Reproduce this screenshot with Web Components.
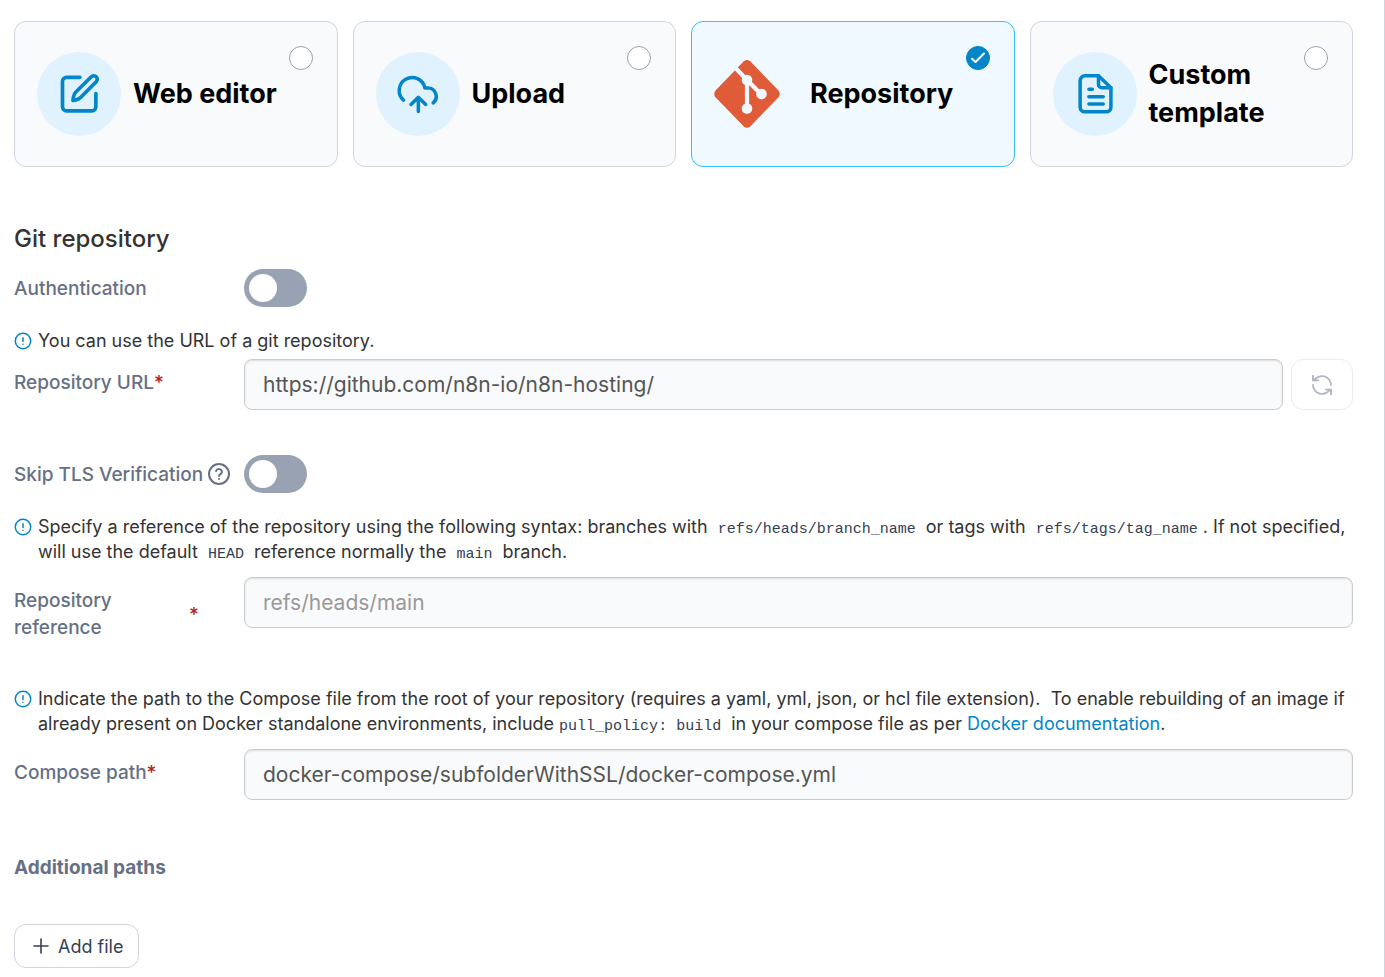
<!DOCTYPE html>
<html lang="en">
<head>
<meta charset="utf-8">
<title>Create stack</title>
<style>
    body {
        margin: 0;
        background: #fff;
        color: #333;
        font-family: Inter, "Liberation Sans", sans-serif;
        font-size: 18px;
        line-height: 25px;
        --blue: #0086c9;
        --muted: #667085;
        --line: #d0d5dd;
        --grey: #98a2b3;
        --surface: #f9fafb;
    }
</style>
</head>
<body>
<stack-form></stack-form>

<script>
const ICONS = {
    edit: `<svg width="44" height="44" viewBox="0 0 24 24" fill="none" stroke="currentColor" stroke-width="2" stroke-linecap="round" stroke-linejoin="round">
        <path d="M12.5 2.9H5.2A2.2 2.2 0 0 0 3 5.100V19a2.200 2.200 0 0 0 2.200 2.200H19a2.200 2.200 0 0 0 2.200-2.200v-7.200"/>
        <path d="M9 13.500c.15-1 .6-1.900 1.300-2.600L18.700 2.600a1.900 1.900 0 0 1 2.700 2.700L13 13.800c-.7.700-1.600 1.200-2.600 1.400L8.700 15.500z"/></svg>`,
    upload: `<svg width="42" height="42" viewBox="0 0 24 24" fill="none" stroke="currentColor" stroke-width="2" stroke-linecap="round" stroke-linejoin="round">
        <path d="M3.700 15.500A7.400 7.400 0 1 1 15.900 8.500h1.700a4.900 4.900 0 0 1 3.100 8.600"/>
        <path d="M8 18l4.200-4.100 4.200 4.100M12.200 14v8"/></svg>`,
    git: `<svg width="66" height="68" viewBox="0 0 66 68">
        <path fill="#e05c38" d="M29.800 1.200Q33 -1.100 36.200 1.200L64.500 30.500Q67 34 64.500 37.200L36.200 66.600Q33 69 29.800 66.600L1.500 37.200Q-1 34 1.500 30.500Z"/>
        <g stroke="#f0f9ff" stroke-width="4.200" fill="none"><path d="M20.500 7L33 20L47.500 34.500M33 20V48.500"/></g>
        <g fill="#f0f9ff"><circle cx="33" cy="20" r="5.300"/><circle cx="47.500" cy="34" r="5.300"/><circle cx="33" cy="48.500" r="5.300"/></g></svg>`,
    file: `<svg width="42" height="42" viewBox="0 0 24 24" fill="none" stroke="currentColor" stroke-width="2" stroke-linecap="round" stroke-linejoin="round">
        <path d="M14 1.600H6.200A2.700 2.700 0 0 0 3.500 4.300v15.200a2.700 2.700 0 0 0 2.700 2.700h12.200a2.700 2.700 0 0 0 2.700-2.700V8.400z"/>
        <path d="M14 1.600v4.900a1.900 1.900 0 0 0 1.900 1.900h5.200M8.500 9.300h2M8.500 13.500h8.200M8.500 17.700h8.200"/></svg>`,
    info: `<svg width="18" height="18" viewBox="0 0 18 18" fill="none" stroke="currentColor" stroke-width="1.500" stroke-linecap="round">
        <circle cx="9" cy="9" r="7.700"/><path d="M9 5.800v3.600M9 12.200v.1"/></svg>`,
    help: `<svg width="24" height="24" viewBox="0 0 24 24" fill="none" stroke="currentColor" stroke-width="2" stroke-linecap="round" stroke-linejoin="round">
        <circle cx="12" cy="12" r="10"/><path d="M9.100 9a3 3 0 0 1 5.800 1c0 2-2.900 2.600-2.900 4M12 17v.1"/></svg>`,
    refresh: `<svg width="24" height="24" viewBox="0 0 24 24" fill="none" stroke="currentColor" stroke-width="1.800">
        <path d="M4 8A9 9 0 0 1 21 12.800M20 16A9 9 0 0 1 3 11.200"/>
        <path d="M2.900 2v5.400h6M21.100 22v-5.400h-6"/>
        <path fill="currentColor" stroke="none" d="M3 4v4h4zM21 20v-4h-4z"/></svg>`,
    plus: `<svg width="18" height="18" viewBox="0 0 18 18" fill="none" stroke="currentColor" stroke-width="1.600" stroke-linecap="round">
        <path d="M9 2v14M2 9h14"/></svg>`,
    check: `<svg width="24" height="24" viewBox="0 0 24 24" fill="none" stroke="#fff" stroke-width="2" stroke-linecap="round" stroke-linejoin="round">
        <path d="M6 12.800l3.500 3.200 8.500-8.500"/></svg>`,
};

class BaseElement extends HTMLElement {
    constructor() {
        super();
        const template = document.createElement('template');
        template.innerHTML = this.getTemplate();
        this.attachShadow({ mode: 'open' }).appendChild(template.content.cloneNode(true));
    }

    $(selector) {
        return this.shadowRoot.querySelector(selector);
    }
}

class BoxOption extends BaseElement {
    getTemplate() {
        return `
            <style>
                :host { display: block; }
                label {
                    box-sizing: border-box;
                    display: flex;
                    align-items: center;
                    height: 100%;
                    min-height: 146px;
                    padding: 24px 24px 24px 22px;
                    border: 1px solid var(--line);
                    border-radius: 12px;
                    background: var(--surface);
                    color: #000;
                    cursor: pointer;
                }
                label:has(input:checked) { background: #f0f9ff; border-color: #36bffa; }
                .icon {
                    flex: none;
                    display: grid;
                    place-items: center;
                    width: 84px;
                    height: 84px;
                    margin-right: 12px;
                    border-radius: 50%;
                    background: #e0f2fe;
                    color: var(--blue);
                }
                :host([icon="git"]) .icon { background: none; place-items: center start; }
                .title { flex: 1; font-size: 27px; font-weight: 700; line-height: 38px; }
                .radio { display: grid; align-self: flex-start; }
                .radio > * { grid-area: 1 / 1; }
                input {
                    appearance: none;
                    box-sizing: border-box;
                    width: 24px;
                    height: 24px;
                    margin: 0;
                    border: 1px solid var(--grey);
                    border-radius: 50%;
                    background: #fff;
                }
                input:checked { background: var(--blue); border-color: var(--blue); }
                .radio svg { visibility: hidden; pointer-events: none; }
                input:checked + svg { visibility: visible; }
            </style>
            <label>
                <span class="icon"></span>
                <span class="title"><slot></slot></span>
                <span class="radio"><input type="radio">${ICONS.check}</span>
            </label>
        `;
    }

    connectedCallback() {
        this.$('.icon').innerHTML = ICONS[this.getAttribute('icon')];
        this.$('input').checked = this.hasAttribute('checked');
        this.$('input').addEventListener('change', () => {
            this.dispatchEvent(new CustomEvent('select-option', { bubbles: true }));
        });
    }

    set checked(value) {
        this.$('input').checked = value;
    }
}

class BoxSelector extends BaseElement {
    getTemplate() {
        return `
            <style>
                :host { display: grid; grid-template-columns: repeat(4, 1fr); gap: 15px; }
            </style>
            <slot></slot>
        `;
    }

    connectedCallback() {
        this.addEventListener('select-option', (event) => {
            for (const option of this.children) {
                option.checked = option === event.target;
            }
        });
    }
}

class ToggleField extends BaseElement {
    getTemplate() {
        return `
            <style>
                :host { display: flex; align-items: center; }
                .label { display: flex; align-items: center; gap: 4px; width: 230px; color: var(--muted); }
                label { font-size: 19px; font-weight: 500; line-height: 27px; white-space: nowrap; }
                .help { display: none; }
                :host([help]) .help { display: flex; }
                input {
                    appearance: none;
                    box-sizing: border-box;
                    display: flex;
                    width: 63px;
                    height: 38px;
                    margin: 0;
                    padding: 5px;
                    border-radius: 19px;
                    background: var(--grey);
                    cursor: pointer;
                }
                input::before { content: ""; width: 28px; height: 28px; border-radius: 50%; background: #fff; }
                input:checked { background: var(--blue); justify-content: flex-end; }
            </style>
            <div class="label"><label for="toggle"></label><span class="help">${ICONS.help}</span></div>
            <input type="checkbox" id="toggle">
        `;
    }

    connectedCallback() {
        this.$('label').textContent = this.getAttribute('label');
    }
}

class FormTip extends BaseElement {
    getTemplate() {
        return `
            <style>
                :host { display: flex; gap: 6px; }
                .icon { flex: none; display: flex; align-items: center; height: 25px; color: var(--blue); }
                p { margin: 0; }
                ::slotted(code) {
                    padding: 0 5px;
                    color: #344054;
                    font-family: "Liberation Mono", monospace;
                    font-size: 15px;
                    line-height: 1;
                }
                ::slotted(code.flush) { padding-left: 0; }
                ::slotted(a) { color: var(--blue); text-decoration: none; }
            </style>
            <span class="icon">${ICONS.info}</span>
            <p><slot></slot></p>
        `;
    }
}

class TextField extends BaseElement {
    getTemplate() {
        return `
            <style>
                :host { display: flex; align-items: flex-start; }
                label {
                    box-sizing: border-box;
                    flex: none;
                    display: flex;
                    align-items: center;
                    width: 230px;
                    padding: 10px 45px 0 0;
                    color: var(--muted);
                    font-size: 19px;
                    font-weight: 500;
                    line-height: 27px;
                }
                .star { color: #b42318; }
                .control { flex: 1; display: flex; gap: 8px; }
                input {
                    box-sizing: border-box;
                    flex: 1;
                    min-width: 0;
                    height: 51px;
                    padding: 0 18px;
                    border: 1px solid #ccc;
                    border-radius: 8px;
                    background: var(--surface);
                    box-shadow: inset 0 1px 2px rgba(0, 0, 0, .12);
                    color: #555;
                    font-family: inherit;
                    font-size: 21px;
                }
                input::placeholder { color: #999; }
            </style>
            <label for="field"><span class="text"></span><span class="star">*</span></label>
            <div class="control"><input type="text" id="field" required><slot></slot></div>
        `;
    }

    connectedCallback() {
        const input = this.$('input');
        this.$('.text').textContent = this.getAttribute('label');
        input.value = this.getAttribute('value') || '';
        input.placeholder = this.getAttribute('placeholder') || '';
    }
}

class IconButton extends BaseElement {
    getTemplate() {
        return `
            <style>
                :host { display: inline-flex; }
                button {
                    box-sizing: border-box;
                    display: flex;
                    align-items: center;
                    justify-content: center;
                    gap: 8px;
                    min-height: 44px;
                    padding: 0 15px 0 17px;
                    border: 1px solid var(--line);
                    border-radius: 12px;
                    background: #fff;
                    color: #344054;
                    font-family: inherit;
                    font-size: 18px;
                }
                :host([disabled]) button {
                    width: 62px;
                    padding: 0;
                    gap: 0;
                    border-color: #eaecf0;
                    color: #b2b9c5;
                }
            </style>
            <button type="button"><slot name="icon"></slot><slot></slot></button>
        `;
    }

    connectedCallback() {
        const button = this.$('button');
        this.$('slot[name=icon]').innerHTML = ICONS[this.getAttribute('icon')];
        button.disabled = this.hasAttribute('disabled');
        if (this.title) {
            button.setAttribute('aria-label', this.title);
        }
    }
}

class StackForm extends BaseElement {
    getTemplate() {
        return `
            <style>
                :host {
                    box-sizing: border-box;
                    display: block;
                    min-height: 100vh;
                    padding: 21px 31px 9px 14px;
                    border-right: 1px solid var(--line);
                }
                h2 { margin: 57px 0 15px; font-size: 24px; font-weight: 500; line-height: 30px; }
                h3 { margin: 54px 0 43px; color: var(--muted); font-size: 19px; font-weight: 700; line-height: 27px; }
                form-tip { margin: 21px 0 13px; }
                form-tip.short { margin-bottom: 6px; }
                text-field + toggle-field, text-field + form-tip { margin-top: 45px; }
            </style>
            <box-selector>
                <box-option icon="edit">Web editor</box-option>
                <box-option icon="upload">Upload</box-option>
                <box-option icon="git" checked>Repository</box-option>
                <box-option icon="file">Custom template</box-option>
            </box-selector>

            <h2>Git repository</h2>
            <toggle-field label="Authentication"></toggle-field>
            <form-tip class="short">You can use the URL of a git repository.</form-tip>
            <text-field label="Repository URL" value="https://github.com/n8n-io/n8n-hosting/">
                <icon-button icon="refresh" title="Refresh" disabled></icon-button>
            </text-field>
            <toggle-field label="Skip TLS Verification" help></toggle-field>
            <form-tip>Specify a reference of the repository using the following syntax: branches with <code>refs/heads/branch_name</code> or tags with <code>refs/tags/tag_name</code>. If not specified, will use the default <code>HEAD</code> reference normally the <code>main</code> branch.</form-tip>
            <text-field label="Repository reference" placeholder="refs/heads/main"></text-field>
            <form-tip>Indicate the path to the Compose file from the root of your repository (requires a yaml, yml, json, or hcl file extension).&nbsp; To enable rebuilding of an image if already present on Docker standalone environments, include <code class="flush">pull_policy: build</code> in your compose file as per <a href="#docs">Docker documentation</a>.</form-tip>
            <text-field label="Compose path" value="docker-compose/subfolderWithSSL/docker-compose.yml"></text-field>

            <h3>Additional paths</h3>
            <icon-button icon="plus">Add file</icon-button>
        `;
    }
}

customElements.define('box-option', BoxOption);
customElements.define('box-selector', BoxSelector);
customElements.define('toggle-field', ToggleField);
customElements.define('form-tip', FormTip);
customElements.define('text-field', TextField);
customElements.define('icon-button', IconButton);
customElements.define('stack-form', StackForm);
</script>
</body>
</html>
